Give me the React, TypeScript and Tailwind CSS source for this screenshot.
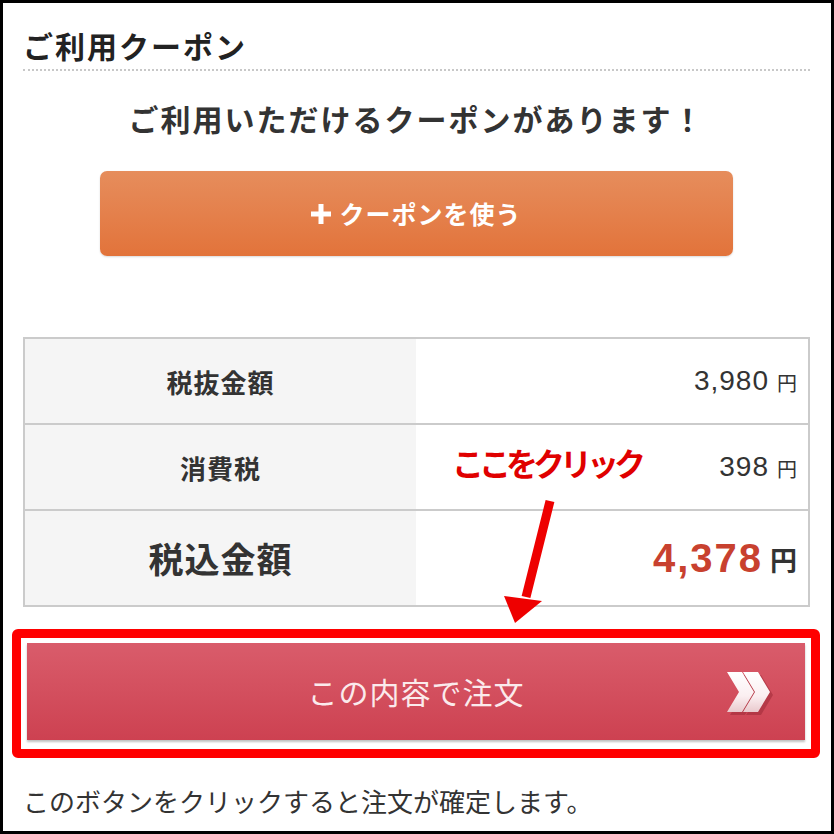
import React from 'react';

const jp = { fontFamily: '"Noto Sans CJK JP", "Noto Sans", sans-serif' };
const num = { fontFamily: '"Liberation Sans", Arial, "Noto Sans CJK JP", sans-serif' };

function Chevrons() {
  return (
    <svg width="48" height="44" viewBox="0 0 48 44" className="shrink-0">
      <defs>
        <linearGradient id="chev" x1="0" y1="0" x2="0" y2="1">
          <stop offset="0" stopColor="#ffffff" />
          <stop offset="0.6" stopColor="#fbeff1" />
          <stop offset="1" stopColor="#e9c9cd" />
        </linearGradient>
      </defs>
      <g fill="#9e2a37" opacity="0.55" transform="translate(2 2)">
        <polygon points="2,2 17,2 29,22 17,42 2,42 14,22" />
        <polygon points="18,2 33,2 45,22 33,42 18,42 30,22" />
      </g>
      <g fill="url(#chev)">
        <polygon points="1,1 16,1 28,21 16,41 1,41 13,21" />
        <polygon points="17,1 32,1 44,21 32,41 17,41 29,21" />
      </g>
    </svg>
  );
}

function Arrow() {
  return (
    <svg
      width="70"
      height="140"
      viewBox="0 0 70 140"
      className="absolute left-[490px] top-[490px] pointer-events-none"
    >
      <line x1="57" y1="8" x2="33" y2="104" stroke="#ee0000" strokeWidth="9" />
      <polygon points="11,103 49,108 22,130" fill="#ee0000" />
    </svg>
  );
}

type Row = { label: string; value: string; big?: boolean };

const rows: Row[] = [
  { label: '税抜金額', value: '3,980' },
  { label: '消費税', value: '398' },
  { label: '税込金額', value: '4,378', big: true },
];

export default function App() {
  return (
    <div
      className="relative w-[834px] h-[834px] border-[3px] border-black bg-white text-[#333] overflow-hidden"
      style={jp}
    >
      <div className="pl-[20px] pr-[21px]">
        <h2 className="pt-[22px] pb-[4px] text-[30px] leading-[40px] font-bold tracking-[2px] text-[#222] border-b-2 border-dotted border-[#c8c8c8]">
          ご利用クーポン
        </h2>

        <p className="mt-[27px] text-center text-[30px] leading-[40px] font-bold tracking-[2px] text-[#333]">
          ご利用いただけるクーポンがあります！
        </p>

        <button className="mt-[33px] mx-auto flex h-[85px] w-[633px] items-center justify-center gap-[8px] rounded-[7px] bg-gradient-to-b from-[#e68d5c] to-[#e2733a] text-white shadow-[0_1px_2px_rgba(0,0,0,0.15)]">
          <svg width="20" height="20" viewBox="0 0 20 20">
            <rect x="7.5" y="0" width="5" height="20" fill="#fff" />
            <rect x="0" y="7.5" width="20" height="5" fill="#fff" />
          </svg>
          <span className="text-[25px] font-bold tracking-[1px]">クーポンを使う</span>
        </button>

        <div className="mt-[81px] border-2 border-[#cbcbcb]">
          {rows.map((r, i) => (
            <div
              key={r.label}
              className={
                'flex ' +
                (i > 0 ? 'border-t-2 border-[#cbcbcb] ' : '') +
                (r.big ? 'h-[96px]' : i > 0 ? 'h-[86px]' : 'h-[84px]')
              }
            >
              <div className="w-[391px] flex items-center justify-center bg-[#f5f5f5]">
                <span
                  className={
                    r.big
                      ? 'text-[35px] font-bold tracking-[1px] text-[#333]'
                      : 'text-[26px] font-bold tracking-[1px] text-[#333]'
                  }
                >
                  {r.label}
                </span>
              </div>
              <div className="flex-1 flex items-center justify-end pr-[11px] bg-white">
                {r.big ? (
                  <>
                    <span style={num} className="text-[40px] font-bold text-[#c8412f] tracking-[2px]">
                      {r.value}
                    </span>
                    <span className="ml-[7px] mt-[4px] text-[27px] font-bold text-[#333]">円</span>
                  </>
                ) : (
                  <>
                    <span style={num} className="text-[28px] text-[#333] tracking-[1px]">
                      {r.value}
                    </span>
                    <span className="ml-[8px] mt-[4px] text-[20px] text-[#333]">円</span>
                  </>
                )}
              </div>
            </div>
          ))}
        </div>

        <div className="relative mt-[36px] ml-[4px] mr-[5px]">
          <div className="absolute -left-[15px] -top-[14px] -right-[15px] -bottom-[18px] border-[9px] border-[#ff0000] rounded-[6px] pointer-events-none" />
          <button className="relative flex h-[97px] w-full items-center justify-center bg-gradient-to-b from-[#d95c6b] to-[#cd4151] shadow-[0_2px_2px_rgba(0,0,0,0.25)]">
            <span className="text-[30px] text-[#fbeaec] tracking-[1px]">この内容で注文</span>
            <span className="absolute right-[31px] top-[28px]">
              <Chevrons />
            </span>
          </button>
        </div>

        <p className="mt-[43px] text-[26px] leading-[36px] text-[#333]">
          このボタンをクリックすると注文が確定します。
        </p>
      </div>

      <div className="absolute left-[449px] top-[437px] text-[32px] leading-[44px] font-bold tracking-[-5px] text-[#e00000]">
        ここをクリック
      </div>
      <Arrow />
    </div>
  );
}
